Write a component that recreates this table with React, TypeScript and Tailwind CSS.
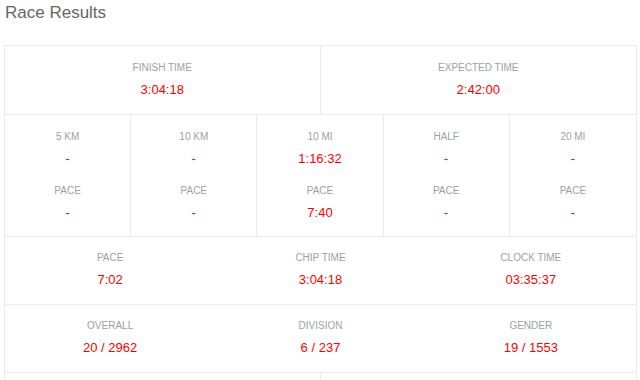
import React from 'react';

interface Stat {
    label: string;
    value: string;
}

const splits: { split: Stat; pace: Stat }[] = [
    { split: { label: '5 KM', value: '-' }, pace: { label: 'PACE', value: '-' } },
    { split: { label: '10 KM', value: '-' }, pace: { label: 'PACE', value: '-' } },
    { split: { label: '10 MI', value: '1:16:32' }, pace: { label: 'PACE', value: '7:40' } },
    { split: { label: 'HALF', value: '-' }, pace: { label: 'PACE', value: '-' } },
    { split: { label: '20 MI', value: '-' }, pace: { label: 'PACE', value: '-' } },
];

const times: Stat[] = [
    { label: 'PACE', value: '7:02' },
    { label: 'CHIP TIME', value: '3:04:18' },
    { label: 'CLOCK TIME', value: '03:35:37' },
];

const places: Stat[] = [
    { label: 'OVERALL', value: '20 / 2962' },
    { label: 'DIVISION', value: '6 / 237' },
    { label: 'GENDER', value: '19 / 1553' },
];

function StatBlock({ stat }: { stat: Stat }) {
    return (
        <div className="flex flex-col items-center">
            <div className="text-[10px] leading-[14px] text-[#9a9fa8]">{stat.label}</div>
            <div className="mt-[6px] text-[13px] leading-[18px] text-[#f00]">{stat.value}</div>
        </div>
    );
}

export default function App() {
    return (
        <div className="w-[640px] h-[380px] overflow-hidden bg-white font-['Liberation_Sans',Arial,sans-serif]">
            <h4 className="pl-[5px] pt-[1px] text-[17px] leading-[24px] text-[#666]">Race Results</h4>

            <div className="ml-[4px] mt-[20px] w-[633px] border border-[#ebebeb]">
                <div className="grid grid-cols-2 border-b border-[#ebebeb]">
                    <div className="pt-[15px] pb-[15px] border-r border-[#ebebeb]">
                        <StatBlock stat={{ label: 'FINISH TIME', value: '3:04:18' }} />
                    </div>
                    <div className="pt-[15px] pb-[15px]">
                        <StatBlock stat={{ label: 'EXPECTED TIME', value: '2:42:00' }} />
                    </div>
                </div>

                <div className="grid grid-cols-5 border-b border-[#ebebeb]">
                    {splits.map((s, i) => (
                        <div key={s.split.label} className={`pt-[15px] pb-[14px] flex flex-col gap-[16px] ${i < splits.length - 1 ? 'border-r border-[#ebebeb]' : ''}`}>
                            <StatBlock stat={s.split} />
                            <StatBlock stat={s.pace} />
                        </div>
                    ))}
                </div>

                <div className="grid grid-cols-3 border-b border-[#ebebeb]">
                    {times.map((t) => (
                        <div key={t.label} className="pt-[14px] pb-[15px]">
                            <StatBlock stat={t} />
                        </div>
                    ))}
                </div>

                <div className="grid grid-cols-3 border-b border-[#ebebeb]">
                    {places.map((p) => (
                        <div key={p.label} className="pt-[14px] pb-[15px]">
                            <StatBlock stat={p} />
                        </div>
                    ))}
                </div>

                <div className="grid grid-cols-2">
                    <div className="h-[68px] border-r border-[#ebebeb]" />
                    <div className="h-[68px]" />
                </div>
            </div>
        </div>
    );
}
